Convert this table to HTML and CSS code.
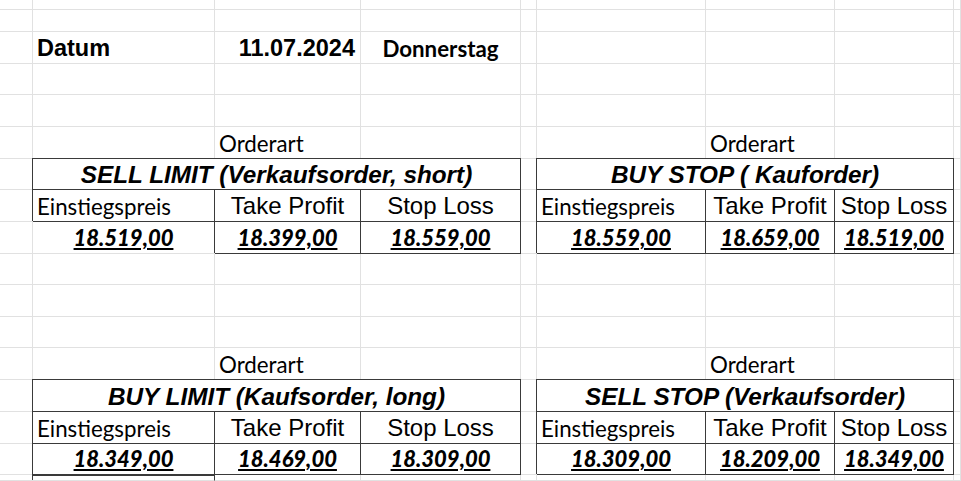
FILE: index.html
```html
<!DOCTYPE html>
<html lang="de">
<head>
<meta charset="utf-8">
<title>Orderarten</title>
<link rel="stylesheet" href="styles.css">
</head>
<body>
<div class="sheet">
  <!-- row 1 -->
  <div class="c"></div><div class="c"></div><div class="c"></div><div class="c"></div><div class="c"></div><div class="c"></div><div class="c"></div><div class="c"></div><div class="c"></div>
  <!-- row 2 -->
  <div class="c"></div><div class="c"></div><div class="c"></div><div class="c"></div><div class="c"></div><div class="c"></div><div class="c"></div><div class="c"></div><div class="c"></div>
  <!-- row 3 -->
  <div class="c"></div>
  <div class="c lf arial big">Datum</div>
  <div class="c rt arial big">11.07.2024</div>
  <div class="c ctr cal day">Donnerstag</div>
  <div class="c"></div><div class="c"></div><div class="c"></div><div class="c"></div><div class="c"></div>
  <!-- row 4 -->
  <div class="c"></div><div class="c"></div><div class="c"></div><div class="c"></div><div class="c"></div><div class="c"></div><div class="c"></div><div class="c"></div><div class="c"></div>
  <!-- row 5 -->
  <div class="c"></div><div class="c"></div><div class="c"></div><div class="c"></div><div class="c"></div><div class="c"></div><div class="c"></div><div class="c"></div><div class="c"></div>
  <!-- row 6 -->
  <div class="c"></div><div class="c"></div>
  <div class="c lf cal txt">Orderart</div>
  <div class="c"></div><div class="c"></div><div class="c"></div>
  <div class="c lf cal txt">Orderart</div>
  <div class="c"></div><div class="c"></div>
  <!-- row 7 -->
  <div class="c"></div>
  <div class="c k span3 ctr arial title">SELL LIMIT (Verkaufsorder, short)</div>
  <div class="c"></div>
  <div class="c k span3 ctr arial title">BUY STOP ( Kauforder)</div>
  <div class="c"></div>
  <!-- row 8 -->
  <div class="c"></div>
  <div class="c k lf cal txt">Einstiegspreis</div>
  <div class="c k ctr arial head">Take Profit</div>
  <div class="c k ctr arial head">Stop Loss</div>
  <div class="c"></div>
  <div class="c k lf cal txt">Einstiegspreis</div>
  <div class="c k ctr arial head">Take Profit</div>
  <div class="c k ctr arial head">Stop Loss</div>
  <div class="c"></div>
  <!-- row 9 -->
  <div class="c"></div>
  <div class="c ctr cal val"><span>18.519,00</span></div>
  <div class="c k ctr cal val"><span>18.399,00</span></div>
  <div class="c k ctr cal val"><span>18.559,00</span></div>
  <div class="c"></div>
  <div class="c k ctr cal val"><span>18.559,00</span></div>
  <div class="c k ctr cal val"><span>18.659,00</span></div>
  <div class="c k ctr cal val"><span>18.519,00</span></div>
  <div class="c"></div>
  <!-- row 10 -->
  <div class="c"></div><div class="c"></div><div class="c"></div><div class="c"></div><div class="c"></div><div class="c"></div><div class="c"></div><div class="c"></div><div class="c"></div>
  <!-- row 11 -->
  <div class="c"></div><div class="c"></div><div class="c"></div><div class="c"></div><div class="c"></div><div class="c"></div><div class="c"></div><div class="c"></div><div class="c"></div>
  <!-- row 12 -->
  <div class="c"></div><div class="c"></div><div class="c"></div><div class="c"></div><div class="c"></div><div class="c"></div><div class="c"></div><div class="c"></div><div class="c"></div>
  <!-- row 13 -->
  <div class="c"></div><div class="c"></div>
  <div class="c lf cal txt">Orderart</div>
  <div class="c"></div><div class="c"></div><div class="c"></div>
  <div class="c lf cal txt">Orderart</div>
  <div class="c"></div><div class="c"></div>
  <!-- row 14 -->
  <div class="c"></div>
  <div class="c k span3 ctr arial title">BUY LIMIT (Kaufsorder, long)</div>
  <div class="c"></div>
  <div class="c k span3 ctr arial title">SELL STOP (Verkaufsorder)</div>
  <div class="c"></div>
  <!-- row 15 -->
  <div class="c"></div>
  <div class="c k lf cal txt">Einstiegspreis</div>
  <div class="c k ctr arial head">Take Profit</div>
  <div class="c k ctr arial head">Stop Loss</div>
  <div class="c"></div>
  <div class="c k lf cal txt">Einstiegspreis</div>
  <div class="c k ctr arial head">Take Profit</div>
  <div class="c k ctr arial head">Stop Loss</div>
  <div class="c"></div>
  <!-- row 16 -->
  <div class="c"></div>
  <div class="c k ctr cal val"><span>18.349,00</span></div>
  <div class="c k ctr cal val"><span>18.469,00</span></div>
  <div class="c k ctr cal val"><span>18.309,00</span></div>
  <div class="c"></div>
  <div class="c k ctr cal val"><span>18.309,00</span></div>
  <div class="c k ctr cal val"><span>18.209,00</span></div>
  <div class="c k ctr cal val"><span>18.349,00</span></div>
  <div class="c"></div>
  <!-- row 17 -->
  <div class="c"></div>
  <div class="c k box"></div>
  <div class="c"></div><div class="c"></div><div class="c"></div><div class="c"></div><div class="c"></div><div class="c"></div><div class="c"></div>
</div>
</body>
</html>
```

FILE: styles.css
```css
html, body {
  margin: 0;
  padding: 0;
  background: #ffffff;
  overflow: hidden;
}

.sheet {
  display: grid;
  grid-template-columns: 33px 182px 146px 160px 16px 169px 129px 119px 7px;
  grid-template-rows: 10px 22px 32px 31px 32px 32px 31px 32px 32px 31px 32px 31px 32px 32px 32px 31px 6px;
  width: 961px;
  height: 481px;
  overflow: hidden;
}

.c {
  box-sizing: border-box;
  border-right: 1px solid #e1e1e1;
  border-bottom: 1px solid #e1e1e1;
  display: flex;
  align-items: flex-end;
  justify-content: flex-start;
  white-space: nowrap;
  min-width: 0;
  color: #000;
  line-height: 1;
}

.k {
  border-right-color: #3a3a3a;
  border-bottom-color: #3a3a3a;
  box-shadow: 0 -1px 0 #3a3a3a, -1px -1px 0 #3a3a3a;
}

.span3 { grid-column: span 3; }
.ctr { justify-content: center; }
.rt { justify-content: flex-end; padding-right: 5px; }
.lf { padding-left: 4px; }

.arial { font-family: "Liberation Sans", Arial, sans-serif; }
.cal { font-family: Lato, "Open Sans", sans-serif; }

.big {
  font-size: 23.5px;
  font-weight: bold;
  padding-bottom: 3px;
}

.day {
  font-size: 22.3px;
  font-weight: bold;
  padding-bottom: 3px;
}

.txt {
  font-size: 22.3px;
  padding-bottom: 3px;
}

.title {
  font-size: 24.3px;
  font-weight: bold;
  font-style: italic;
  padding-bottom: 2px;
}

.head {
  font-size: 24px;
  padding-bottom: 3px;
}

.val {
  font-size: 22px;
  font-weight: 900;
  font-style: italic;
  padding-bottom: 4px;
}

.val span {
  text-decoration: underline;
  text-decoration-thickness: 2px;
  text-underline-offset: 2px;
}

.box {
  border-top: 1px solid #3a3a3a;
  border-bottom-color: #e1e1e1;
}
```
